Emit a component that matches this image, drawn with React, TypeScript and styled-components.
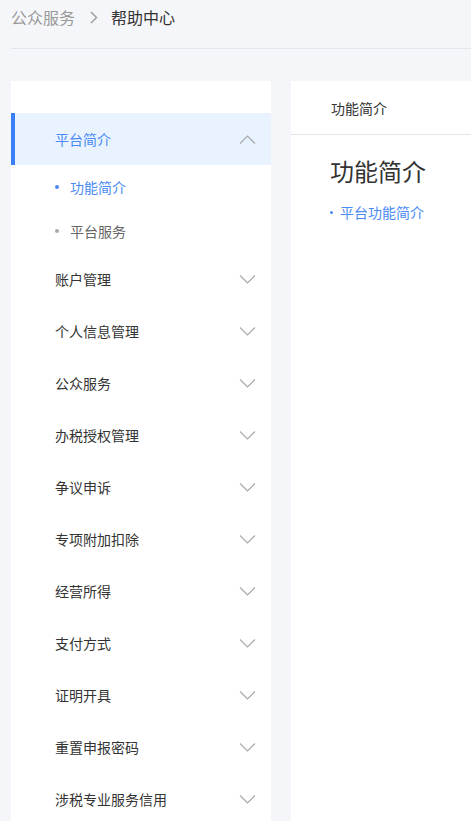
import React from 'react';
import styled, { createGlobalStyle } from 'styled-components';

const GlobalStyle = createGlobalStyle`
  html, body {
    margin: 0;
    padding: 0;
    background: #f5f6fa;
    font-family: "Noto Sans CJK SC", "Noto Sans", sans-serif;
    overflow: hidden;
  }
`;

const Page = styled.div`
  padding-left: 11px;
  width: 560px;
`;

const Breadcrumb = styled.div`
  height: 49px;
  display: flex;
  align-items: center;
  padding-bottom: 14px;
  box-sizing: border-box;
  border-bottom: 1px solid #e3e5ea;
  font-size: 16px;
  line-height: 20px;
`;

const Crumb = styled.span<{ $current?: boolean }>`
  color: ${p => (p.$current ? '#333' : '#999')};
`;

const Sep = styled.span`
  display: flex;
  align-items: center;
  margin: 0 13px 0 15px;
`;

const Body = styled.div`
  display: flex;
  gap: 20px;
  margin-top: 32px;
  align-items: flex-start;
`;

const Sidebar = styled.div`
  width: 260px;
  background: #fff;
  padding-top: 32px;
  min-height: 760px;
`;

const MenuItem = styled.div<{ $active?: boolean }>`
  height: 52px;
  display: flex;
  align-items: center;
  justify-content: space-between;
  box-sizing: border-box;
  padding: 0 15px 0 40px;
  font-size: 14px;
  color: ${p => (p.$active ? '#4a8af4' : '#333')};
  background: ${p => (p.$active ? '#e8f3ff' : '#fff')};
  border-left: 4px solid ${p => (p.$active ? '#3a7ff6' : 'transparent')};
`;

const SubItem = styled.div<{ $active?: boolean }>`
  height: 44px;
  display: flex;
  align-items: center;
  padding-left: 44px;
  font-size: 14px;
  color: ${p => (p.$active ? '#4a8af4' : '#666')};
`;

const Dot = styled.span<{ $active?: boolean }>`
  width: 4px;
  height: 4px;
  border-radius: 50%;
  background: ${p => (p.$active ? '#4a8af4' : '#aaa')};
  margin: 0 11px 0 0;
`;

const Panel = styled.div`
  flex: 1;
  background: #fff;
  min-height: 760px;
`;

const PanelHeader = styled.div`
  height: 54px;
  display: flex;
  align-items: center;
  padding-left: 40px;
  font-size: 14px;
  color: #333;
  border-bottom: 1px solid #e3e5ea;
  box-sizing: border-box;
`;

const PanelContent = styled.div`
  padding: 20px 39px;
`;

const Title = styled.h1`
  margin: 0;
  font-size: 24px;
  font-weight: 400;
  color: #333;
  line-height: 32px;
`;

const Link = styled.div`
  margin-top: 15px;
  display: flex;
  align-items: center;
  font-size: 14px;
  color: #4a8af4;
`;

const LinkDot = styled.span`
  width: 3px;
  height: 3px;
  border-radius: 50%;
  background: #4a8af4;
  margin-right: 7px;
`;

const Chevron = ({ up }: { up?: boolean }) => (
  <svg width="17" height="9" viewBox="0 0 17 9" fill="none">
    <path
      d={up ? 'M1 8.5L8.5 1L16 8.5' : 'M1 0.5L8.5 8L16 0.5'}
      stroke="#aaa"
      strokeWidth="1.2"
    />
  </svg>
);

const menus = [
  '账户管理',
  '个人信息管理',
  '公众服务',
  '办税授权管理',
  '争议申诉',
  '专项附加扣除',
  '经营所得',
  '支付方式',
  '证明开具',
  '重置申报密码',
  '涉税专业服务信用',
];

export default function App() {
  return (
    <Page>
      <GlobalStyle />
      <Breadcrumb>
        <Crumb>公众服务</Crumb>
        <Sep>
          <svg width="8" height="13" viewBox="0 0 8 13" fill="none">
            <path d="M1 1L6.5 6.5L1 12" stroke="#999" strokeWidth="1.4" />
          </svg>
        </Sep>
        <Crumb $current>帮助中心</Crumb>
      </Breadcrumb>
      <Body>
        <Sidebar>
          <MenuItem $active>
            <span>平台简介</span>
            <Chevron up />
          </MenuItem>
          <SubItem $active>
            <Dot $active />
            功能简介
          </SubItem>
          <SubItem>
            <Dot />
            平台服务
          </SubItem>
          {menus.map(m => (
            <MenuItem key={m}>
              <span>{m}</span>
              <Chevron />
            </MenuItem>
          ))}
        </Sidebar>
        <Panel>
          <PanelHeader>功能简介</PanelHeader>
          <PanelContent>
            <Title>功能简介</Title>
            <Link>
              <LinkDot />
              平台功能简介
            </Link>
          </PanelContent>
        </Panel>
      </Body>
    </Page>
  );
}
